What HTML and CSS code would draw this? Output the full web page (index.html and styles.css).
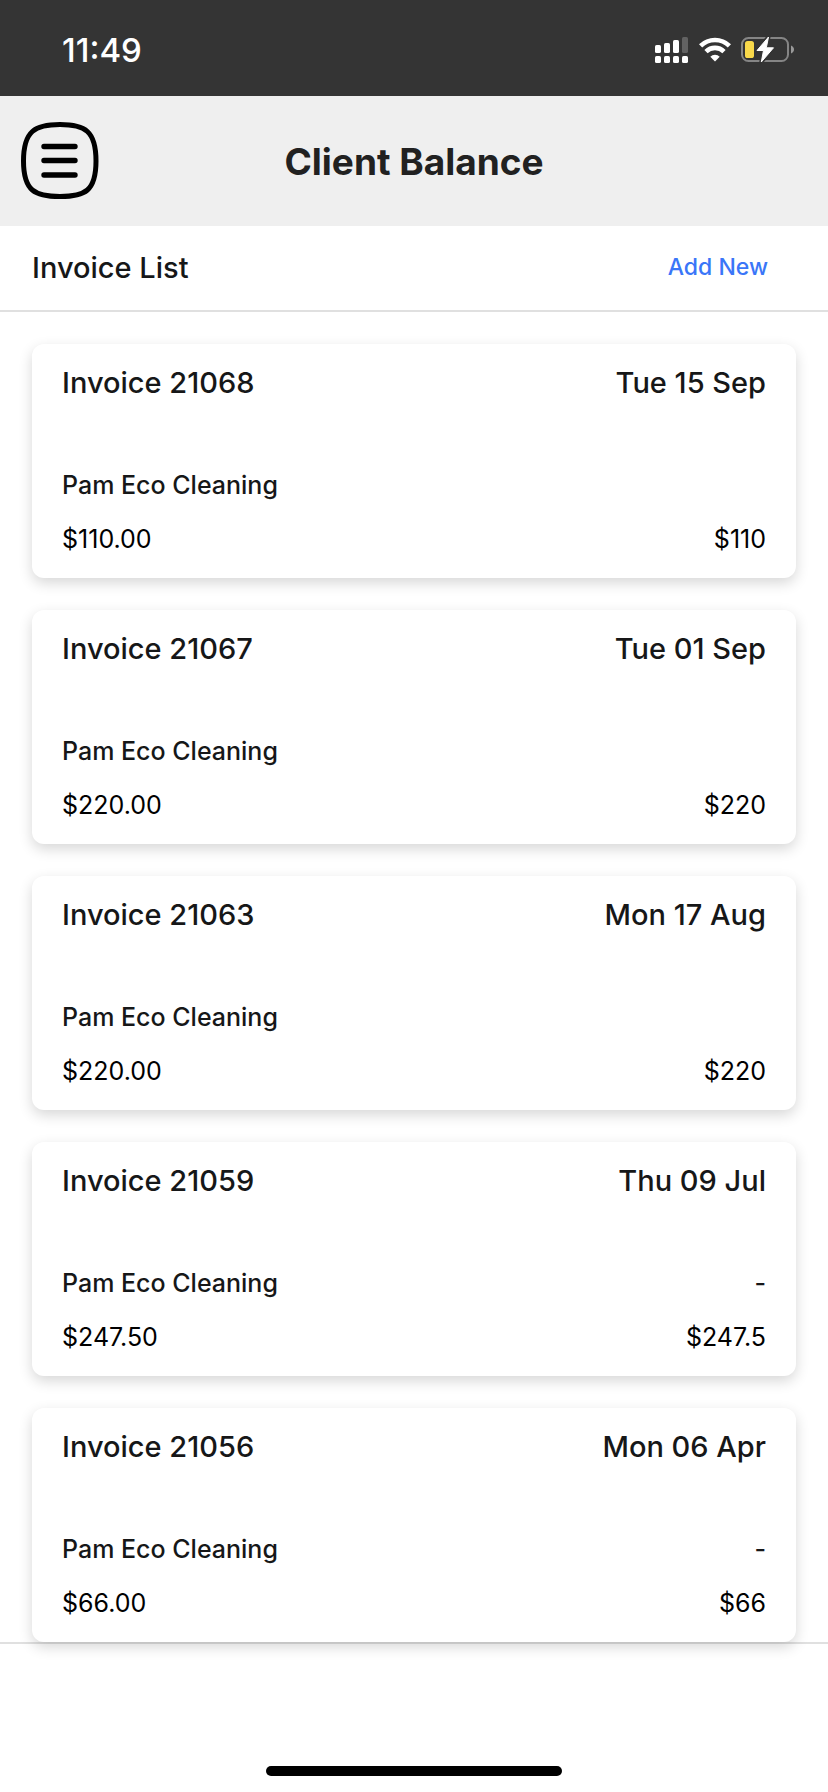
FILE: index.html
```html
<!DOCTYPE html>
<html lang="en">
<head>
<meta charset="utf-8">
<meta name="viewport" content="width=device-width, initial-scale=1">
<title>Client Balance</title>
<link rel="stylesheet" href="styles.css">
</head>
<body>
<div class="screen">
  <div class="status">
    <time class="clock">11:49</time>
    <div class="indicators">
      <svg class="signal" viewBox="0 0 34 28" aria-hidden="true">
        <g fill="#fff">
          <rect x="0" y="9" width="6" height="8" rx="1.6"/>
          <rect x="9" y="7" width="6" height="10" rx="1.6"/>
          <rect x="18" y="4" width="6" height="13" rx="1.6"/>
          <rect x="0" y="20" width="6" height="7" rx="1.6"/>
          <rect x="9" y="20" width="6" height="7" rx="1.6"/>
          <rect x="18" y="20" width="6" height="7" rx="1.6"/>
          <rect x="27" y="20" width="6" height="7" rx="1.6"/>
        </g>
        <rect x="27" y="1" width="6" height="16" rx="1.6" fill="#626262"/>
      </svg>
      <svg class="wifi" viewBox="0 0 32 28" aria-hidden="true">
        <g fill="none" stroke="#fff" stroke-width="4.6">
          <path d="M1.600 9.800a20.600 20.600 0 0 1 28.800 0"/>
          <path d="M7 15.600a12.800 12.800 0 0 1 18 0"/>
        </g>
        <path d="M16 25.400l-4.700-4.700a6.800 6.800 0 0 1 9.400 0z" fill="#fff"/>
      </svg>
      <svg class="battery" viewBox="0 0 54 28" aria-hidden="true">
        <rect x="1" y="2" width="46" height="23" rx="6.500" fill="none" stroke="#858585" stroke-width="2"/>
        <path d="M50 9.500c4 1.800 4 6.200 0 8z" fill="#999"/>
        <rect x="4" y="5" width="9" height="17" rx="2.600" fill="#f8d84a"/>
        <path d="M27.500 1L16 14.500h6.500L20.300 26 32.500 11.800h-7.200z" fill="#fff" stroke="#343434" stroke-width="4" stroke-linejoin="round"/>
        <path d="M27.500 1L16 14.500h6.500L20.300 26 32.500 11.800h-7.200z" fill="#fff" stroke="#fff" stroke-width="1" stroke-linejoin="round"/>
      </svg>
    </div>
  </div>

  <header class="topbar">
    <button class="menu" type="button" aria-label="Menu">
      <svg viewBox="0 0 78 78" aria-hidden="true">
        <path d="M39 2.500C64 2.500 75 9 75 39S64 74.500 39 74.500 2.500 69 2.500 39 14 2.500 39 2.500z" fill="none" stroke="#000" stroke-width="5"/>
        <path d="M23 24.500h31M23 38.500h31M23 53h31" stroke="#000" stroke-width="5.400" stroke-linecap="round"/>
      </svg>
    </button>
    <h1 class="title">Client Balance</h1>
  </header>

  <main>
    <div class="list-head">
      <h2 class="heading">Invoice List</h2>
      <a class="add" href="#">Add New</a>
    </div>
    <ul class="invoices">
      <li class="card">
        <div class="row row-title"><h3 class="heading">Invoice 21068</h3><time class="heading">Tue 15 Sep</time></div>
        <div class="row row-client"><span>Pam Eco Cleaning</span></div>
        <div class="row"><span>$110.00</span><span>$110</span></div>
      </li>
      <li class="card">
        <div class="row row-title"><h3 class="heading">Invoice 21067</h3><time class="heading">Tue 01 Sep</time></div>
        <div class="row row-client"><span>Pam Eco Cleaning</span></div>
        <div class="row"><span>$220.00</span><span>$220</span></div>
      </li>
      <li class="card">
        <div class="row row-title"><h3 class="heading">Invoice 21063</h3><time class="heading">Mon 17 Aug</time></div>
        <div class="row row-client"><span>Pam Eco Cleaning</span></div>
        <div class="row"><span>$220.00</span><span>$220</span></div>
      </li>
      <li class="card">
        <div class="row row-title"><h3 class="heading">Invoice 21059</h3><time class="heading">Thu 09 Jul</time></div>
        <div class="row row-client"><span>Pam Eco Cleaning</span><span>-</span></div>
        <div class="row"><span>$247.50</span><span>$247.5</span></div>
      </li>
      <li class="card">
        <div class="row row-title"><h3 class="heading">Invoice 21056</h3><time class="heading">Mon 06 Apr</time></div>
        <div class="row row-client"><span>Pam Eco Cleaning</span><span>-</span></div>
        <div class="row"><span>$66.00</span><span>$66</span></div>
      </li>
    </ul>
  </main>

  <footer class="bottom"><div class="home"></div></footer>
</div>
</body>
</html>
```
FILE: styles.css
```css
* {
  box-sizing: border-box;
}

body {
  margin: 0;
  background: #fff;
  color: #000;
  font-family: Inter, Roboto, sans-serif;
  font-size: 25px;
}

h1, h2, h3, ul {
  margin: 0;
  padding: 0;
}

.screen {
  display: flex;
  flex-direction: column;
  min-height: 100vh;
}

.status {
  display: flex;
  align-items: center;
  justify-content: space-between;
  height: 96px;
  padding: 4px 33px 0 62px;
  background: #343434;
}

.clock {
  color: #fff;
  font-size: 33px;
  font-weight: 500;
}

.indicators {
  display: flex;
  align-items: center;
}

.indicators svg {
  display: block;
  height: 28px;
}

.signal {
  width: 34px;
}

.wifi {
  width: 32px;
  margin: 0 10px;
}

.battery {
  width: 54px;
}

.topbar {
  display: grid;
  grid-template-columns: 78px 1fr 78px;
  align-items: center;
  height: 130px;
  padding: 0 21px;
  background: #efefef;
}

.menu {
  width: 78px;
  height: 78px;
  padding: 0;
  border: 0;
  background: none;
}

.menu svg {
  display: block;
}

.title {
  color: #212121;
  font-size: 37px;
  font-weight: 700;
  text-align: center;
}

.list-head {
  display: flex;
  align-items: center;
  justify-content: space-between;
  height: 86px;
  padding: 0 60px 2px 32px;
  border-bottom: 2px solid #e0e0e0;
}

.heading {
  color: #161718;
  font-size: 29px;
  font-weight: 500;
}

.add {
  color: #3a76f8;
  font-size: 23px;
  font-weight: 500;
  text-decoration: none;
}

.invoices {
  display: grid;
  gap: 32px;
  padding: 32px 32px 0;
  border-bottom: 2px solid #e0e0e0;
  list-style: none;
}

.card {
  padding: 18px 30px 12px;
  border-radius: 12px;
  background: #fff;
  box-shadow: 0 5px 14px rgba(0, 0, 0, 0.16);
}

.row {
  display: flex;
  justify-content: space-between;
  line-height: 54px;
}

.row-title {
  margin-bottom: 54px;
  line-height: 42px;
}

.row-client {
  color: #161718;
  font-weight: 500;
}

.bottom {
  display: flex;
  flex: 1;
  align-items: flex-end;
  justify-content: center;
  padding-bottom: 16px;
}

.home {
  width: 296px;
  height: 10px;
  border-radius: 5px;
  background: #000;
}
```
